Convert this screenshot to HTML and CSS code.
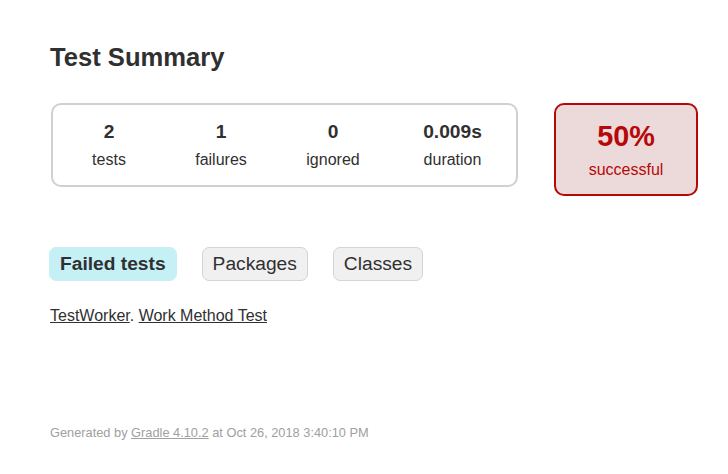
FILE: index.html
```html
<!DOCTYPE html>
<html>
<head>
<meta charset="utf-8">
<title>Test results - Test Summary</title>
<link rel="stylesheet" href="styles.css">
</head>
<body>
<div class="content">
  <h1 class="title">Test Summary</h1>
  <div class="summary">
    <div class="group">
      <div class="info">
        <div class="counter">2</div>
        <p class="label">tests</p>
      </div>
      <div class="info">
        <div class="counter">1</div>
        <p class="label">failures</p>
      </div>
      <div class="info">
        <div class="counter">0</div>
        <p class="label">ignored</p>
      </div>
      <div class="info info-wide">
        <div class="counter">0.009s</div>
        <p class="label">duration</p>
      </div>
    </div>
    <div class="rate">
      <div class="percent">50%</div>
      <p class="label">successful</p>
    </div>
  </div>
  <ul class="tabs">
    <li class="tab tab-selected"><a class="tab-link" href="#tab0">Failed tests</a></li>
    <li class="tab"><a class="tab-link" href="#tab1">Packages</a></li>
    <li class="tab"><a class="tab-link" href="#tab2">Classes</a></li>
  </ul>
  <ul class="link-list">
    <li class="link-item"><a class="plain-link" href="#">TestWorker</a>. <a class="plain-link" href="#">Work Method Test</a></li>
  </ul>
  <div class="footer">Generated by <a class="footer-link" href="#">Gradle 4.10.2</a> at Oct 26, 2018 3:40:10 PM</div>
</div>
</body>
</html>
```

FILE: styles.css
```css
html, body {
  margin: 0;
  padding: 0;
  background: #ffffff;
}
body {
  font-family: "Liberation Sans", Arial, sans-serif;
  font-size: 16px;
  color: #303030;
}
.content {
  padding: 30px 50px;
}
.title {
  font-size: 25.6px;
  font-weight: bold;
  margin: 13px 0 0 0;
  white-space: nowrap;
}
.summary {
  display: flex;
  align-items: flex-start;
  margin-top: 30px;
  padding: 1px 1px 1px 0;
}
.group {
  display: flex;
  flex-shrink: 0;
  border: 2px solid #d0d0d0;
  border-radius: 10px;
  margin-left: 1px;
}
.info {
  flex-shrink: 0;
  width: 110px;
  margin: 1px;
  padding: 15px 0;
  text-align: center;
}
.info-wide {
  width: 125px;
}
.counter {
  font-size: 19.2px;
  font-weight: bold;
  margin-bottom: 8px;
}
.label {
  margin: 0;
}
.rate {
  flex-shrink: 0;
  width: 140px;
  margin-left: 36px;
  padding: 15px 0;
  text-align: center;
  border: 2px solid #b60808;
  border-radius: 10px;
  background-color: #ecdada;
  color: #b60808;
}
.percent {
  font-size: 28.8px;
  font-weight: bold;
  margin-bottom: 8px;
}
.tabs {
  display: flex;
  gap: 25px;
  list-style: none;
  margin: 50px 0 0 -1px;
  padding: 0;
}
.tab {
  padding: 5px 10px;
  border: 1px solid #d4d4d4;
  border-radius: 7px;
  background-color: #f0f0f0;
}
.tab-selected {
  background-color: #c5f0f5;
  border-color: #c5f0f5;
}
.tab-link {
  display: block;
  font-size: 19.2px;
  color: #303030;
  text-decoration: none;
}
.tab-selected .tab-link {
  font-weight: bold;
}
.link-list {
  list-style: none;
  margin: 26px 0 0 0;
  padding: 0;
}
.link-item {
  margin: 0;
}
.plain-link {
  color: #303030;
  text-decoration: underline;
}
.footer {
  margin-top: 100px;
  font-size: 12.8px;
  color: #a0a0a0;
  white-space: nowrap;
}
.footer-link {
  color: #a0a0a0;
  text-decoration: underline;
}
```
